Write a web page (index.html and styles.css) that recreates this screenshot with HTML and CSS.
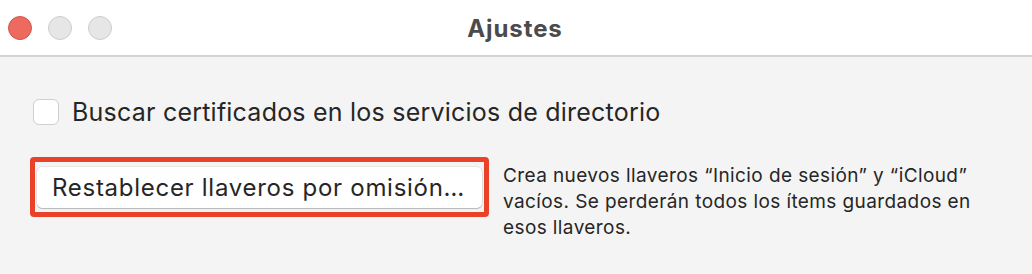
FILE: index.html
```html
<!DOCTYPE html>
<html lang="es">
<head>
<meta charset="utf-8">
<title>Ajustes</title>
<link rel="stylesheet" href="styles.css">
</head>
<body>
<div class="window">
  <header class="titlebar">
    <div class="lights">
      <span class="light light-close"></span>
      <span class="light light-min"></span>
      <span class="light light-max"></span>
    </div>
    <div class="title">Ajustes</div>
  </header>
  <main class="content">
    <label class="check-row">
      <span class="checkbox"></span>
      <span class="check-label">Buscar certificados en los servicios de directorio</span>
    </label>
    <div class="reset-row">
      <div class="highlight">
        <button class="btn">Restablecer llaveros por omisión…</button>
      </div>
      <p class="desc">Crea nuevos llaveros “Inicio de sesión” y “iCloud” vacíos. Se perderán todos los ítems guardados en esos llaveros.</p>
    </div>
  </main>
</div>
</body>
</html>
```
FILE: styles.css
```css
html, body {
  margin: 0;
  padding: 0;
  background: #f4f4f4;
}
body {
  font-family: Inter, "Liberation Sans", sans-serif;
  color: #262626;
  width: 1032px;
  height: 274px;
  overflow: hidden;
}
.window {
  width: 1032px;
  height: 274px;
  background: #f4f4f4;
  display: flex;
  flex-direction: column;
}
.titlebar {
  height: 55px;
  background: #ffffff;
  border-bottom: 2px solid #d3d3d3;
  position: relative;
  display: flex;
  align-items: center;
  justify-content: center;
  flex-shrink: 0;
}
.lights {
  position: absolute;
  left: 8px;
  top: 16px;
  display: flex;
  gap: 16px;
}
.light {
  width: 24px;
  height: 24px;
  border-radius: 50%;
  box-sizing: border-box;
}
.light-close {
  background: #ec6a5e;
  border: 1px solid #d2564a;
}
.light-min, .light-max {
  background: #e6e6e6;
  border: 1px solid #cdcdcd;
}
.title {
  font-size: 24px;
  font-weight: 700;
  letter-spacing: 0.9px;
  color: #4b4b4b;
  margin-left: -2px;
  margin-top: 1px;
}
.content {
  flex: 1;
  display: flex;
  flex-direction: column;
  padding: 41px 0 0 0;
}
.check-row {
  display: flex;
  align-items: center;
  gap: 13px;
  padding-left: 33px;
  height: 28px;
}
.checkbox {
  width: 26px;
  height: 26px;
  box-sizing: border-box;
  border-radius: 6px;
  background: #ffffff;
  border: 1px solid #cfcfcf;
  flex-shrink: 0;
}
.check-label {
  font-size: 25px;
  letter-spacing: 0.22px;
  color: #262626;
}
.reset-row {
  display: flex;
  align-items: flex-start;
  margin-top: 31px;
  padding-left: 30px;
}
.highlight {
  border: 5px solid #ea4129;
  border-radius: 4px;
  padding: 5px 2px 4px 2px;
  flex-shrink: 0;
}
.btn {
  display: block;
  width: 445px;
  height: 41px;
  background: #ffffff;
  border: none;
  border-radius: 5px;
  box-shadow: 0 0 0 0.5px rgba(0,0,0,0.12), 0 1px 1px rgba(0,0,0,0.2);
  font-family: Inter, "Liberation Sans", sans-serif;
  font-size: 24px;
  letter-spacing: 0.72px;
  color: #262626;
  text-align: left;
  padding: 0 0 0 15px;
  margin: 0;
}
.desc {
  margin: 6px 0 0 14px;
  width: 492px;
  font-size: 19px;
  letter-spacing: 0.4px;
  line-height: 26px;
  color: #262626;
}
```
